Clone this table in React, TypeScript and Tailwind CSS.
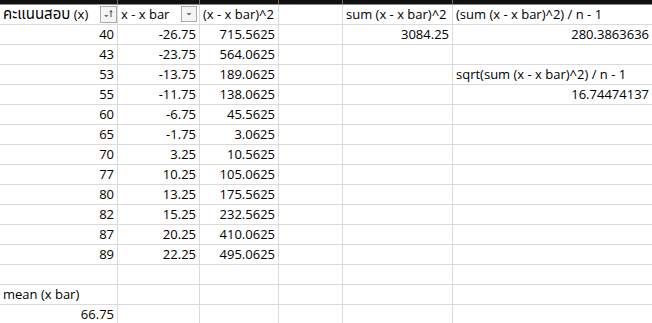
import React from "react";

type Row = [string, string, string, string, string, string];

const rows: Row[] = [
  ["40", "-26.75", "715.5625", "", "3084.25", "280.3863636"],
  ["43", "-23.75", "564.0625", "", "", ""],
  ["53", "-13.75", "189.0625", "", "", "sqrt(sum (x - x bar)^2) / n - 1"],
  ["55", "-11.75", "138.0625", "", "", "16.74474137"],
  ["60", "-6.75", "45.5625", "", "", ""],
  ["65", "-1.75", "3.0625", "", "", ""],
  ["70", "3.25", "10.5625", "", "", ""],
  ["77", "10.25", "105.0625", "", "", ""],
  ["80", "13.25", "175.5625", "", "", ""],
  ["82", "15.25", "232.5625", "", "", ""],
  ["87", "20.25", "410.0625", "", "", ""],
  ["89", "22.25", "495.0625", "", "", ""],
  ["", "", "", "", "", ""],
  ["mean (x bar)", "", "", "", "", ""],
  ["66.75", "", "", "", "", ""],
];

// text cells sit left, numbers sit right, like Excel does
const isText = (v: string) => v !== "" && isNaN(Number(v));

function SortFilterButton() {
  return (
    <div className="absolute right-0 top-[1px] w-[17px] h-[17px] border border-[#ababab] bg-[#f4f4f4]">
      <svg width="15" height="15" viewBox="0 0 15 15" className="block">
        <path d="M3 8h4.5l-2.25 2.25z" fill="#6d6d6d" />
        <path d="M10 3.5v6.5" stroke="#4a4a4a" strokeWidth="1" />
        <path d="M8.8 5.2L10 3.6l1.2 1.6" stroke="#4a4a4a" strokeWidth="1" fill="none" />
      </svg>
    </div>
  );
}

function FilterButton() {
  return (
    <div className="absolute right-[2px] top-[1px] w-[16px] h-[16px] border border-[#ababab] bg-[#f4f4f4]">
      <svg width="14" height="14" viewBox="0 0 14 14" className="block">
        <path d="M4.5 6h5l-2.5 2.5z" fill="#6d6d6d" />
      </svg>
    </div>
  );
}

function Cell({ value, last }: { value: string; last?: boolean }) {
  const left = isText(value);
  return (
    <div
      className={`h-[20px] border-b border-[#dadada] ${last ? "" : "border-r"} flex items-end pb-[2px] px-[3px] whitespace-nowrap relative ${
        left ? "justify-start" : "justify-end"
      }`}
    >
      <span className={left ? "absolute left-[3px] bottom-[2px]" : ""}>{value}</span>
    </div>
  );
}

export default function App() {
  const header: React.ReactNode[] = [
    <>
      <span className="text-[15px]">คะแนนสอบ</span> (x)
    </>,
    "x - x bar",
    "(x - x bar)^2",
    "",
    "sum (x - x bar)^2",
    "(sum (x - x bar)^2) / n - 1",
  ];

  return (
    <div
      className="w-[652px] h-[323px] overflow-hidden bg-white text-black text-[13px] leading-[15px]"
      style={{ fontFamily: '"Open Sans", "Noto Sans Thai", "Noto Sans", "DejaVu Sans", sans-serif' }}
    >
      {/* column header strip, mostly scrolled out of view */}
      <div className="grid grid-cols-[118px_82px_79px_64px_110px_1fr] h-[5px] bg-[#111] border-b border-[#8a8a8a]">
        <div className="border-r border-[#6a6a6a]" />
        <div className="border-r border-[#6a6a6a]" />
        <div className="border-r border-[#6a6a6a]" />
        <div className="border-r border-[#6a6a6a]" />
        <div className="border-r border-[#6a6a6a]" />
        <div />
      </div>

      <div className="grid grid-cols-[118px_82px_79px_64px_110px_1fr]">
        {header.map((h, i) => (
          <div
            key={i}
            className={`h-[20px] border-b border-[#dadada] ${i === 5 ? "" : "border-r"} relative whitespace-nowrap`}
          >
            <span className="absolute left-[3px] bottom-[2px]">{h}</span>
            {i === 0 && <SortFilterButton />}
            {i === 1 && <FilterButton />}
          </div>
        ))}

        {rows.map((r, ri) =>
          r.map((v, ci) => <Cell key={`${ri}-${ci}`} value={v} last={ci === 5} />)
        )}
      </div>
    </div>
  );
}
